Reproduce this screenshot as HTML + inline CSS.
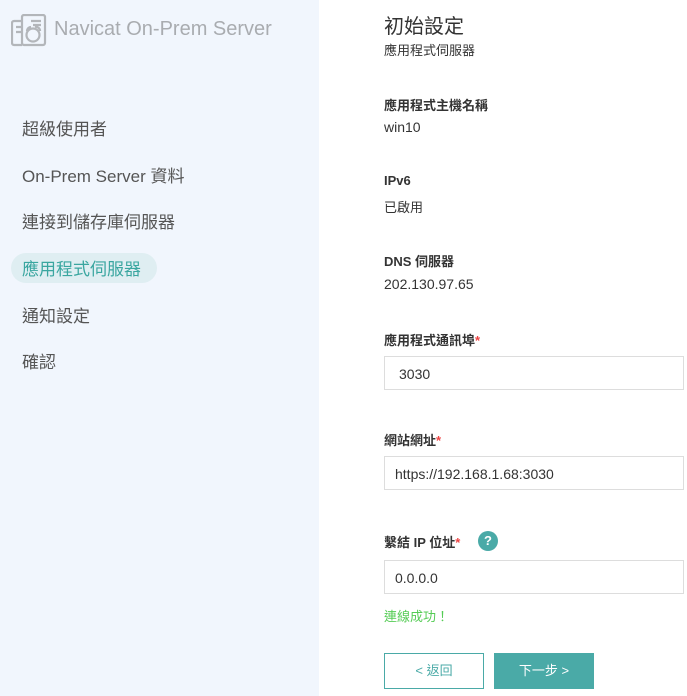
<!DOCTYPE html>
<html><head><meta charset="utf-8"><style>
body{margin:0;width:687px;height:696px;overflow:hidden;background:#fff;font-family:"Liberation Sans","Noto Sans CJK TC",sans-serif;position:relative;color:#333}
.side{position:absolute;left:0;top:0;width:319px;height:696px;background:#f1f6fd}
.logo{position:absolute;left:54px;top:18px;font-size:20px;color:#a9acb0}
.nav{position:absolute;left:22px;font-size:17px;color:#555}
.pill{position:absolute;left:11px;top:253px;width:146px;height:30px;border-radius:15px;background:#dfeef2}
.a{position:absolute;left:384px;font-size:13px}
.l{font-weight:bold;color:#333}
.inp{position:absolute;left:384px;width:298px;height:34px;border:1px solid #ddd;font-size:14px;line-height:34px;text-indent:14px;box-sizing:border-box;color:#333}
.st{color:#e44}
</style></head><body>
<div class="side">
<svg style="position:absolute;left:11px;top:14px" width="36" height="34" viewBox="0 0 36 34" fill="none" stroke="#b3b6ba" stroke-width="2.2"><rect x="11" y="1" width="23" height="30" rx="2"/><path d="M11 7H3a2 2 0 0 0-2 2v20a2 2 0 0 0 2 2h8"/><path d="M5 13h5M5 18h5M20 7h10M22 11h8"/><circle cx="22" cy="21" r="6.5"/><path d="M16 17a4 4 0 0 1 4-4M24 13a4 4 0 0 1 5 4"/></svg>
<div class="logo">Navicat On-Prem Server</div>
<div class="nav" style="top:115px">超級使用者</div>
<div class="nav" style="top:162px">On-Prem Server 資料</div>
<div class="nav" style="top:208px">連接到儲存庫伺服器</div>
<div class="pill"></div>
<div class="nav" style="top:255px;color:#3aa6a0">應用程式伺服器</div>
<div class="nav" style="top:302px">通知設定</div>
<div class="nav" style="top:348px">確認</div>
</div>
<div class="a" style="top:10px;font-size:20px">初始設定</div>
<div class="a" style="top:40px">應用程式伺服器</div>
<div class="a l" style="top:95px">應用程式主機名稱</div>
<div class="a" style="top:119px;font-size:14px">win10</div>
<div class="a l" style="top:173px">IPv6</div>
<div class="a" style="top:197px">已啟用</div>
<div class="a l" style="top:251px">DNS 伺服器</div>
<div class="a" style="top:276px;font-size:14px">202.130.97.65</div>
<div class="a l" style="top:330px">應用程式通訊埠<span class="st">*</span></div>
<div class="inp" style="top:356px;width:300px">3030</div>
<div class="a l" style="top:430px">網站網址<span class="st">*</span></div>
<div class="inp" style="top:456px;width:300px;text-indent:10px">https://192.168.1.68:3030</div>
<div class="a l" style="top:532px">繫結 IP 位址<span class="st">*</span></div>
<div style="position:absolute;left:478px;top:531px;width:20px;height:20px;border-radius:50%;background:#4aaaa7;color:#fff;font-size:13px;font-weight:bold;text-align:center;line-height:20px">?</div>
<div class="inp" style="top:560px;width:300px;text-indent:10px">0.0.0.0</div>
<div class="a" style="top:606px;color:#5c5">連線成功！</div>
<div style="position:absolute;left:384px;top:653px;width:100px;height:36px;box-sizing:border-box;border:1px solid #4aaaa7;color:#4aaaa7;font-size:13px;text-align:center;line-height:34px">&lt; 返回</div>
<div style="position:absolute;left:494px;top:653px;width:100px;height:36px;background:#4aaaa7;color:#fff;font-size:13px;text-align:center;line-height:36px">下一步 &gt;</div>
</body></html>
